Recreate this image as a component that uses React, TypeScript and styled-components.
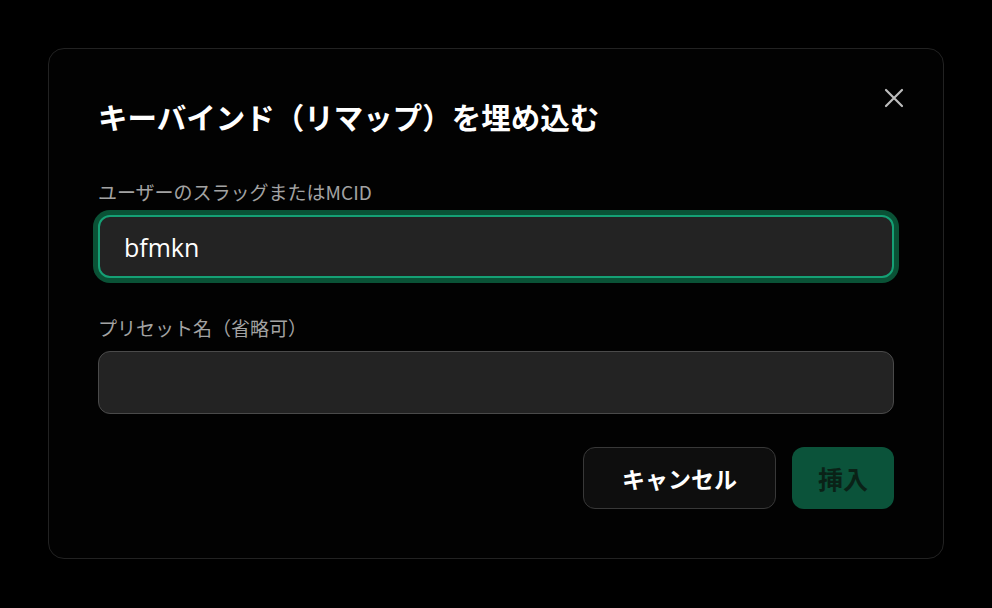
import styled, { createGlobalStyle } from 'styled-components';

const GlobalStyle = createGlobalStyle`
  html, body {
    margin: 0;
    padding: 0;
    background: #000;
  }
  body {
    font-family: "Noto Sans CJK JP", "Noto Sans", sans-serif;
    color: #fff;
  }
`

const Page = styled.div`
  width: 992px;
  height: 608px;
  padding: 48px;
  box-sizing: border-box;
`

const Dialog = styled.div`
  position: relative;
  width: 896px;
  height: 511px;
  box-sizing: border-box;
  padding: 46px 49px 48px 49px;
  background: #020202;
  border: 1.5px solid #222;
  border-radius: 16px;
  display: flex;
  flex-direction: column;
`

const Title = styled.h2`
  margin: 0;
  font-size: 29.5px;
  line-height: 42px;
  font-weight: 700;
  color: #fff;
`

const CloseButton = styled.button`
  position: absolute;
  top: 35px;
  right: 35px;
  width: 28px;
  height: 28px;
  padding: 0;
  border: none;
  background: transparent;
  display: flex;
  align-items: center;
  justify-content: center;
  cursor: pointer;
`

const Field = styled.div<{ $top: number }>`
  display: flex;
  flex-direction: column;
  margin-top: ${p => p.$top}px;
`

const Label = styled.label<{ $gap: number }>`
  font-size: 19px;
  line-height: 24px;
  color: #a3a3a3;
  margin-bottom: ${p => p.$gap}px;
`

const Input = styled.input<{ $focused?: boolean }>`
  height: 63px;
  box-sizing: border-box;
  width: 100%;
  padding: 0 24px;
  border-radius: 12px;
  background: #232323;
  color: #fff;
  font-family: "Open Sans", "Noto Sans", sans-serif;
  font-size: 25px;
  outline: none;
  border: ${p => (p.$focused ? '2px solid #15a075' : '1.5px solid #4a4a4a')};
  box-shadow: ${p => (p.$focused ? '0 0 0 5px #0a5236' : 'none')};
`

const Actions = styled.div`
  display: flex;
  justify-content: flex-end;
  gap: 16px;
  margin-top: 33px;
`

const Button = styled.button<{ $primary?: boolean }>`
  height: 62px;
  box-sizing: border-box;
  border-radius: 12px;
  font-family: "Noto Sans CJK JP", sans-serif;
  font-size: ${p => (p.$primary ? '25px' : '23px')};
  font-weight: 700;
  cursor: pointer;
  padding: 0 ${p => (p.$primary ? '26px' : '38px')};
  background: ${p => (p.$primary ? '#0b533a' : '#0e0e0e')};
  color: ${p => (p.$primary ? '#0a2217' : '#fff')};
  border: ${p => (p.$primary ? 'none' : '1.5px solid #383838')};
`

export default function App() {
  return (
    <>
      <GlobalStyle />
      <Page>
        <Dialog>
          <Title>キーバインド（リマップ）を埋め込む</Title>
          <CloseButton aria-label="閉じる">
            <svg width="20" height="20" viewBox="0 0 20 20" fill="none">
              <path d="M2 2L18 18M18 2L2 18" stroke="#bdbdbd" strokeWidth="2.2" strokeLinecap="round" />
            </svg>
          </CloseButton>
          <Field $top={43}>
            <Label $gap={11}>ユーザーのスラッグまたはMCID</Label>
            <Input $focused defaultValue="bfmkn" />
          </Field>
          <Field $top={38}>
            <Label $gap={11}>プリセット名（省略可）</Label>
            <Input />
          </Field>
          <Actions>
            <Button>キャンセル</Button>
            <Button $primary>挿入</Button>
          </Actions>
        </Dialog>
      </Page>
    </>
  );
}
